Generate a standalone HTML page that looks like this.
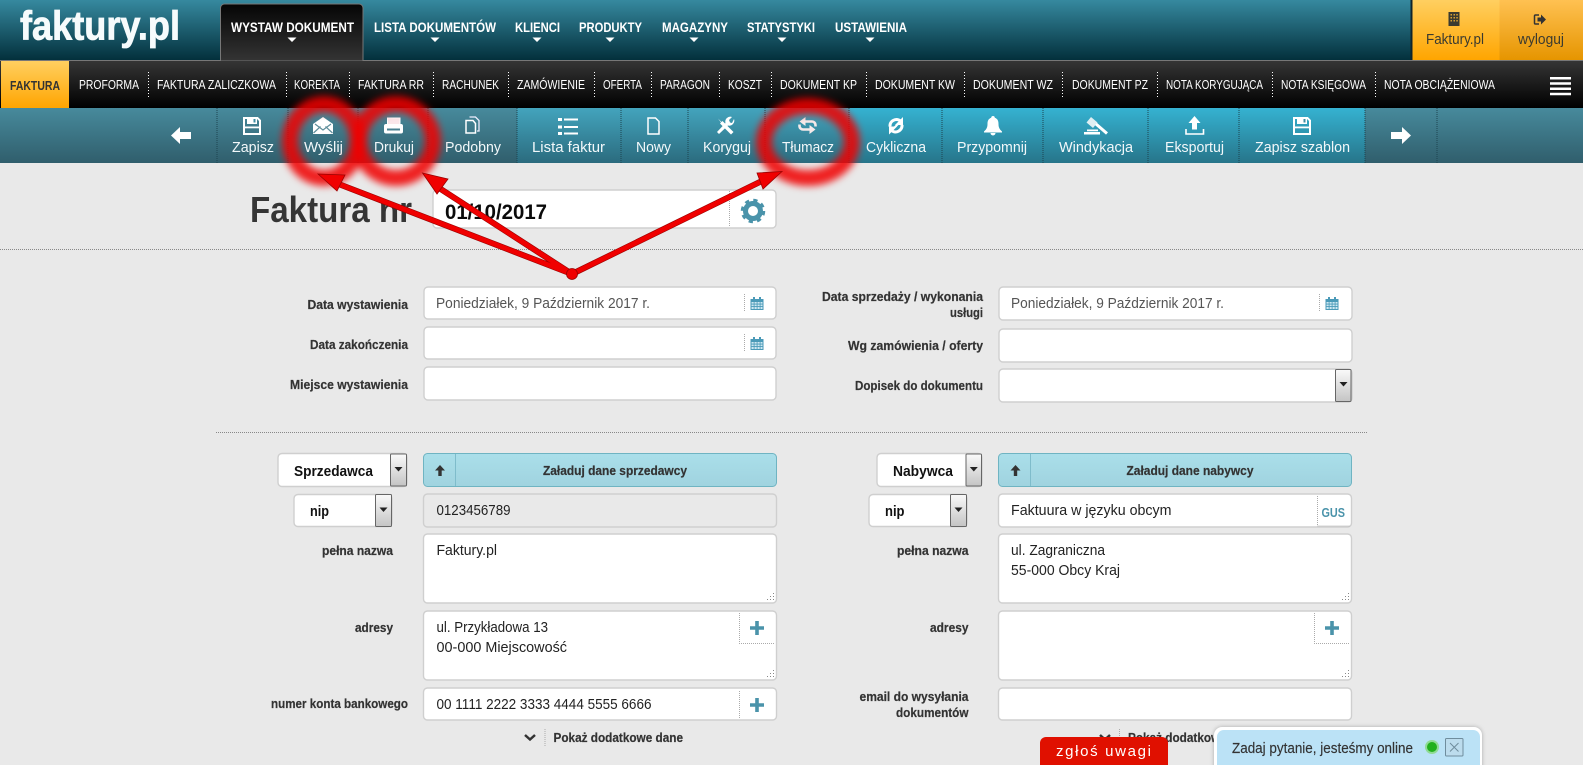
<!DOCTYPE html>
<html lang="pl"><head><meta charset="utf-8"><title>Faktury.pl</title>
<style>
html,body{margin:0;padding:0;width:1583px;height:765px;overflow:hidden;background:#e9e9e9}
svg{display:block;position:absolute;left:0;top:0}
text{font-family:"Liberation Sans",Arial,sans-serif}
.n{font-size:13.5px;font-weight:700;fill:#fff}
.s{font-size:12.5px;fill:#fff}
.t{font-size:15px;fill:#f2f8fa}
.l{font-size:12.5px;font-weight:700;fill:#333;stroke:#333;stroke-width:.2}
.v{font-size:14.5px;fill:#222}
.sel{font-size:15px;font-weight:700;fill:#111}
.inp{fill:#fff;stroke:#cfcfcf;stroke-width:1.4}
.sep{stroke:#fff;stroke-width:1;stroke-dasharray:1 2}
.td{stroke:#1d4450;stroke-width:1;stroke-dasharray:1 1}
.d{stroke:#aaa;stroke-width:1;stroke-dasharray:1 1;fill:none}
</style></head><body>
<svg width="1583" height="765" viewBox="0 0 1583 765" xmlns="http://www.w3.org/2000/svg">
<defs>
<linearGradient id="gh" x1="0" y1="0" x2="0" y2="1"><stop offset="0" stop-color="#36899f"/><stop offset="1" stop-color="#03303c"/></linearGradient>
<linearGradient id="gsub" x1="0" y1="0" x2="0" y2="1"><stop offset="0" stop-color="#353535"/><stop offset="1" stop-color="#000"/></linearGradient>
<linearGradient id="gact" x1="0" y1="0" x2="0" y2="1"><stop offset="0" stop-color="#050505"/><stop offset="1" stop-color="#343434"/></linearGradient>
<linearGradient id="go" x1="0" y1="0" x2="0" y2="1"><stop offset="0" stop-color="#ffcf60"/><stop offset="1" stop-color="#ffa500"/></linearGradient>
<linearGradient id="go2" x1="0" y1="0" x2="0" y2="1"><stop offset="0" stop-color="#ffc152"/><stop offset="1" stop-color="#e69500"/></linearGradient>
<linearGradient id="g1" x1="0" y1="0" x2="0" y2="1"><stop offset="0" stop-color="#478a9c"/><stop offset="1" stop-color="#305e6c"/></linearGradient>
<linearGradient id="g2" x1="0" y1="0" x2="0" y2="1"><stop offset="0" stop-color="#43a4bd"/><stop offset="1" stop-color="#2b6b7e"/></linearGradient>
<linearGradient id="g3" x1="0" y1="0" x2="0" y2="1"><stop offset="0" stop-color="#35b2d1"/><stop offset="1" stop-color="#27758a"/></linearGradient>
<linearGradient id="gb" x1="0" y1="0" x2="0" y2="1"><stop offset="0" stop-color="#aadfea"/><stop offset="1" stop-color="#a0d3df"/></linearGradient>
<linearGradient id="gs" x1="0" y1="0" x2="0" y2="1"><stop offset="0" stop-color="#fafafa"/><stop offset="1" stop-color="#c4c4c4"/></linearGradient>
<filter id="blur" x="-40%" y="-40%" width="180%" height="180%"><feGaussianBlur stdDeviation="3.800"/></filter>
<filter id="sh" x="-10%" y="-30%" width="120%" height="160%"><feGaussianBlur stdDeviation="2"/></filter>
<symbol id="cal" viewBox="0 0 13 13" overflow="visible"><path d="M0 2h13v11H0z" fill="#4a9ab8"/><path d="M1 5h2.200v1.600H1zM4 5h2.200v1.600H4zM7 5h2.200v1.600H7zM10 5h2v1.600h-2zM1 7.500h2.200v1.600H1zM4 7.500h2.200v1.600H4zM7 7.500h2.200v1.600H7zM10 7.500h2v1.600h-2zM1 10h2.200v2H1zM4 10h2.200v2H4zM7 10h2.200v2H7zM10 10h2v2h-2z" fill="#cfe8f2"/><path d="M2.500 0h2v3h-2zM8.500 0h2v3h-2z" fill="#4a9ab8"/></symbol>
<symbol id="floppy" viewBox="0 0 18 18" overflow="visible"><path d="M1 1h13.500L17 3.500V17H1z" fill="none" stroke="#fff" stroke-width="2"/><path d="M4 1h10v6H4z" fill="#fff"/><path d="M10.500 2h2v3.500h-2z" fill="#3f8ea3"/><path d="M1 9.500h16v1.800H1z" fill="#fff"/></symbol>
<symbol id="plus" viewBox="0 0 14 14" overflow="visible"><path d="M5.200 0h3.600v5.200H14v3.600H8.800V14H5.200V8.800H0V5.200h5.200z" fill="#4a93aa"/></symbol>
<symbol id="up" viewBox="0 0 10 11" overflow="visible"><path d="M5 0l5 5.500H6.700V11H3.300V5.500H0z" fill="#333"/></symbol>
<symbol id="grip" viewBox="0 0 9 8" overflow="visible"><path d="M7 0h1v1H7zM7 3h1v1H7zM4 3h1v1H4zM7 6h1v1H7zM4 6h1v1H4zM1 6h1v1H1z" fill="#888"/></symbol>
</defs>

<!-- header -->
<rect width="1583" height="60" fill="url(#gh)"/>
<text x="20" y="39.500" font-size="41" font-weight="700" fill="#f6fbfc" stroke="#f6fbfc" stroke-width=".8" textLength="160" lengthAdjust="spacingAndGlyphs">faktury.pl</text>
<rect x="0" y="60" width="1583" height="1" fill="#777"/>
<path d="M220.500 61V8a4 4 0 0 1 4-4H359a4 4 0 0 1 4 4V61z" fill="url(#gact)" stroke="#777"/>
<text class="n" x="231" y="32" textLength="123" lengthAdjust="spacingAndGlyphs">WYSTAW DOKUMENT</text>
<text class="n" x="374" y="32" textLength="122" lengthAdjust="spacingAndGlyphs">LISTA DOKUMENTÓW</text>
<text class="n" x="515" y="32" textLength="45" lengthAdjust="spacingAndGlyphs">KLIENCI</text>
<text class="n" x="579" y="32" textLength="63" lengthAdjust="spacingAndGlyphs">PRODUKTY</text>
<text class="n" x="662" y="32" textLength="66" lengthAdjust="spacingAndGlyphs">MAGAZYNY</text>
<text class="n" x="747" y="32" textLength="68" lengthAdjust="spacingAndGlyphs">STATYSTYKI</text>
<text class="n" x="835" y="32" textLength="72" lengthAdjust="spacingAndGlyphs">USTAWIENIA</text>
<path d="M287.500 37.500h9l-4.500 4.500zM430.500 37.500h9l-4.500 4.500zM532.500 37.500h9l-4.500 4.500zM605.500 37.500h9l-4.500 4.500zM689.500 37.500h9l-4.500 4.500zM777.500 37.500h9l-4.500 4.500zM865.500 37.500h9l-4.500 4.500z" fill="#fff"/>
<rect x="1410.500" y="0" width="2" height="60" fill="#10242b"/>
<rect x="1412.500" y="0" width="87" height="60" fill="url(#go)"/>
<rect x="1499.500" y="0" width="84" height="60" fill="url(#go2)"/>
<path d="M1448.500 12h11v14h-11z" fill="#3a3a30"/>
<path d="M1450.500 14h1.500v1.500h-1.500zM1453.500 14h1.500v1.500h-1.500zM1456.300 14h1.500v1.500h-1.500zM1450.500 17h1.500v1.500h-1.500zM1453.500 17h1.500v1.500h-1.500zM1456.300 17h1.500v1.500h-1.500zM1450.500 20h1.500v1.500h-1.500zM1453.500 20h1.500v1.500h-1.500zM1456.300 20h1.500v1.500h-1.500z" fill="#d9a030"/>
<path d="M1539 15h-3.500a1 1 0 0 0-1 1v7a1 1 0 0 0 1 1h3.500" fill="none" stroke="#333" stroke-width="1.500"/>
<path d="M1537.500 17.500h3.500V14.500l5 5-5 5v-3h-3.500z" fill="#333"/>
<text x="1426" y="44" font-size="15" fill="#3a3a30" textLength="58" lengthAdjust="spacingAndGlyphs">Faktury.pl</text>
<text x="1518" y="44" font-size="15" fill="#3a3a30" textLength="46" lengthAdjust="spacingAndGlyphs">wyloguj</text>

<!-- subnav -->
<rect x="0" y="61" width="1583" height="47" fill="url(#gsub)"/>
<rect x="1" y="61" width="68" height="47" fill="url(#go)"/>
<text x="10" y="90" font-size="13" font-weight="700" fill="#333" textLength="50" lengthAdjust="spacingAndGlyphs">FAKTURA</text>
<text class="s" x="79" y="89" textLength="60" lengthAdjust="spacingAndGlyphs">PROFORMA</text>
<text class="s" x="157" y="89" textLength="119" lengthAdjust="spacingAndGlyphs">FAKTURA ZALICZKOWA</text>
<text class="s" x="294" y="89" textLength="46" lengthAdjust="spacingAndGlyphs">KOREKTA</text>
<text class="s" x="358" y="89" textLength="66" lengthAdjust="spacingAndGlyphs">FAKTURA RR</text>
<text class="s" x="442" y="89" textLength="57" lengthAdjust="spacingAndGlyphs">RACHUNEK</text>
<text class="s" x="517" y="89" textLength="68" lengthAdjust="spacingAndGlyphs">ZAMÓWIENIE</text>
<text class="s" x="603" y="89" textLength="39" lengthAdjust="spacingAndGlyphs">OFERTA</text>
<text class="s" x="660" y="89" textLength="50" lengthAdjust="spacingAndGlyphs">PARAGON</text>
<text class="s" x="728" y="89" textLength="34" lengthAdjust="spacingAndGlyphs">KOSZT</text>
<text class="s" x="780" y="89" textLength="77" lengthAdjust="spacingAndGlyphs">DOKUMENT KP</text>
<text class="s" x="875" y="89" textLength="80" lengthAdjust="spacingAndGlyphs">DOKUMENT KW</text>
<text class="s" x="973" y="89" textLength="80" lengthAdjust="spacingAndGlyphs">DOKUMENT WZ</text>
<text class="s" x="1072" y="89" textLength="76" lengthAdjust="spacingAndGlyphs">DOKUMENT PZ</text>
<text class="s" x="1166" y="89" textLength="97" lengthAdjust="spacingAndGlyphs">NOTA KORYGUJĄCA</text>
<text class="s" x="1281" y="89" textLength="85" lengthAdjust="spacingAndGlyphs">NOTA KSIĘGOWA</text>
<text class="s" x="1384" y="89" textLength="111" lengthAdjust="spacingAndGlyphs">NOTA OBCIĄŻENIOWA</text>
<path class="sep" d="M148.500 72v25M286.500 72v25M349.500 72v25M433.500 72v25M508.500 72v25M594.500 72v25M651.500 72v25M719.500 72v25M771.500 72v25M866.500 72v25M964.500 72v25M1062.500 72v25M1157.500 72v25M1272.500 72v25M1375.500 72v25"/>
<path d="M1550 77h21v2.500h-21zM1550 82.300h21v2.500h-21zM1550 87.500h21v2.500h-21zM1550 92.700h21v2.500h-21z" fill="#fff"/>

<!-- toolbar -->
<rect x="0" y="108" width="517" height="55" fill="url(#g1)"/>
<rect x="517" y="108" width="332" height="55" fill="url(#g2)"/>
<rect x="849" y="108" width="516" height="55" fill="url(#g3)"/>
<rect x="1365" y="108" width="218" height="55" fill="url(#g1)"/>
<path class="td" d="M217 108v55M288 108v55M358 108v55M428 108v55M517 108v55M621 108v55M688 108v55M765 108v55M849 108v55M942 108v55M1043 108v55M1148 108v55M1239 108v55M1365 108v55M1437 108v55"/>
<path d="M171 135.500l9-8.500v5h11v7h-11v5z" fill="#fff"/>
<path d="M1411 135.500l-9-8.500v5h-11v7h11v5z" fill="#fff"/>
<use href="#floppy" x="243" y="117" width="18" height="18"/>
<path d="M313 124l10-7 10 7v10h-20z" fill="#fff"/><path d="M313.500 133l7-6.500M332.500 133l-7-6.500M315 124l8 6 8-6" fill="none" stroke="#5d8d9a" stroke-width="1.200"/>
<path d="M387.500 118h12.500v7h-12.500z" fill="#fbe7ea" stroke="#fff"/><rect x="384" y="124" width="19" height="9.500" rx="2" fill="#fff"/><rect x="387" y="128.500" width="13" height="2" fill="#4a8090"/>
<path d="M469.500 117h6l3.500 3.500V131h-2" fill="none" stroke="#eef" stroke-width="1.300"/><path d="M466 120.500h7l2.500 3V133H466z" fill="none" stroke="#fff" stroke-width="1.500"/>
<path d="M558 118h4v3h-4zM558 125.500h4v3h-4zM558 132h4v3h-4z" fill="#fff"/><path d="M564 118.500h14v2h-14zM564 126h14v2h-14zM564 132.500h14v2h-14z" fill="#fff"/>
<path d="M648 118h7.500l3.500 3.500V134h-11z" fill="none" stroke="#fff" stroke-width="1.500"/>
<path d="M718 118.500l3.500 3.500 1-1 11 11-2.500 2.500-11-11 1-1zM734 119a5 5 0 0 1-6 6.500l-9 8.500-2-2 8.500-9a5 5 0 0 1 6.500-6l-3 3 1 2.500 2 .5z" fill="#fff"/>
<path d="M804 121.500h8a3.500 3.500 0 0 1 3.500 3.500v1.500M811 129.500h-8a3.500 3.500 0 0 1-3.500-3.500v-1.500" fill="none" stroke="#f6eaea" stroke-width="2.600"/>
<path d="M805.500 117v9l-6-4.500zM809.500 125v9l6-4.500z" fill="#f6eaea"/>
<path d="M890 126.500a6.500 6.500 0 0 1 10.500-5.500M902 125a6.500 6.500 0 0 1-10.500 5.500" fill="none" stroke="#fff" stroke-width="3"/>
<path d="M903 117v8h-8zM889 134.500v-8h8z" fill="#fff"/>
<path d="M899.500 122.500l-7 7" stroke="#fff" stroke-width="2"/>
<path d="M993 116a1.800 1.800 0 0 1 1.800 1.800c2.700 1 3.700 3 3.700 6.200 0 4.500 2 6 3.500 7.500v1H984v-1c1.500-1.500 3.500-3 3.500-7.500 0-3.200 1-5.200 3.700-6.200A1.800 1.800 0 0 1 993 116zM990.500 133h5a2.500 2.500 0 0 1-5 0z" fill="#fff"/>
<path d="M1087 129.500h11v1.700h-11zM1084 132h16v2.500h-16z" fill="#fff"/>
<path d="M1091 117l6.500 5.500-4.500 5.500-6.500-5.500z" fill="#dfeef2"/>
<path d="M1096 124l11 9.500" stroke="#fff" stroke-width="3" fill="none"/>
<path d="M1194.500 116l6 7h-3.500v6.500h-5V123h-3.500z" fill="#fff"/><path d="M1186 129v5h17.500v-5" fill="none" stroke="#fff" stroke-width="1.600"/>
<use href="#floppy" x="1293" y="117" width="18" height="18"/>
<text class="t" x="232" y="152" textLength="42" lengthAdjust="spacingAndGlyphs">Zapisz</text>
<text class="t" x="304" y="152" textLength="39" lengthAdjust="spacingAndGlyphs">Wyślij</text>
<text class="t" x="374" y="152" textLength="40" lengthAdjust="spacingAndGlyphs">Drukuj</text>
<text class="t" x="445" y="152" textLength="56" lengthAdjust="spacingAndGlyphs">Podobny</text>
<text class="t" x="532" y="152" textLength="73" lengthAdjust="spacingAndGlyphs">Lista faktur</text>
<text class="t" x="636" y="152" textLength="35" lengthAdjust="spacingAndGlyphs">Nowy</text>
<text class="t" x="703" y="152" textLength="48" lengthAdjust="spacingAndGlyphs">Koryguj</text>
<text class="t" x="782" y="152" textLength="52" lengthAdjust="spacingAndGlyphs">Tłumacz</text>
<text class="t" x="866" y="152" textLength="60" lengthAdjust="spacingAndGlyphs">Cykliczna</text>
<text class="t" x="957" y="152" textLength="70" lengthAdjust="spacingAndGlyphs">Przypomnij</text>
<text class="t" x="1059" y="152" textLength="74" lengthAdjust="spacingAndGlyphs">Windykacja</text>
<text class="t" x="1165" y="152" textLength="59" lengthAdjust="spacingAndGlyphs">Eksportuj</text>
<text class="t" x="1255" y="152" textLength="95" lengthAdjust="spacingAndGlyphs">Zapisz szablon</text>

<!-- heading -->
<text x="250" y="222" font-size="36" font-weight="700" fill="#353535" textLength="162" lengthAdjust="spacingAndGlyphs">Faktura nr</text>
<rect class="inp" x="433" y="190" width="343" height="38" rx="4"/>
<text x="445" y="219" font-size="21" font-weight="700" fill="#0a0a0a" textLength="102" lengthAdjust="spacingAndGlyphs">01/10/2017</text>
<path class="d" d="M729.500 191v36"/>
<circle cx="753" cy="211" r="7.500" fill="none" stroke="#4a93aa" stroke-width="5"/>
<circle cx="753" cy="211" r="10.500" fill="none" stroke="#4a93aa" stroke-width="3.500" stroke-dasharray="4.120 4.120"/>
<path d="M0 249.500h1583" stroke="#888" stroke-dasharray="1 1"/>

<!-- top form left -->
<text class="l" x="307.500" y="309" textLength="100.500" lengthAdjust="spacingAndGlyphs">Data wystawienia</text>
<text class="l" x="310" y="349" textLength="98" lengthAdjust="spacingAndGlyphs">Data zakończenia</text>
<text class="l" x="290" y="389" textLength="118" lengthAdjust="spacingAndGlyphs">Miejsce wystawienia</text>
<rect class="inp" x="424" y="287" width="352" height="32" rx="4"/>
<rect class="inp" x="424" y="327" width="352" height="32" rx="4"/>
<rect class="inp" x="424" y="367" width="352" height="33" rx="4"/>
<text x="436" y="308" font-size="14.500" fill="#555" textLength="214" lengthAdjust="spacingAndGlyphs">Poniedziałek, 9 Październik 2017 r.</text>
<path class="d" d="M744.500 294v18M744.500 334v18" stroke="#888"/>
<use href="#cal" x="750.500" y="297" width="13" height="13"/>
<use href="#cal" x="750.500" y="337" width="13" height="13"/>

<!-- top form right -->
<text class="l" x="822" y="301" textLength="161" lengthAdjust="spacingAndGlyphs">Data sprzedaży / wykonania</text>
<text class="l" x="950" y="317" textLength="33" lengthAdjust="spacingAndGlyphs">usługi</text>
<text class="l" x="848" y="350" textLength="135" lengthAdjust="spacingAndGlyphs">Wg zamówienia / oferty</text>
<text class="l" x="855" y="390" textLength="128" lengthAdjust="spacingAndGlyphs">Dopisek do dokumentu</text>
<rect class="inp" x="999" y="287" width="353" height="33" rx="4"/>
<rect class="inp" x="999" y="329" width="353" height="33" rx="4"/>
<rect class="inp" x="999" y="369" width="353" height="33" rx="4"/>
<text x="1011" y="308" font-size="14.500" fill="#555" textLength="213" lengthAdjust="spacingAndGlyphs">Poniedziałek, 9 Październik 2017 r.</text>
<path class="d" d="M1319.500 294v18" stroke="#888"/>
<use href="#cal" x="1325.500" y="297" width="13" height="13"/>
<rect x="1335.500" y="369.500" width="15.500" height="32" rx="1" fill="url(#gs)" stroke="#666"/>
<path d="M1339.500 382h8l-4 4.500z" fill="#222"/>
<path d="M216 432.500h1151" stroke="#888" stroke-dasharray="1 1"/>

<!-- seller -->
<rect class="inp" x="278" y="453.500" width="129" height="33" rx="4"/>
<rect x="390.500" y="454" width="16" height="32" rx="1" fill="url(#gs)" stroke="#666"/>
<path d="M394.500 467h8l-4 4.500z" fill="#222"/>
<text class="sel" x="294" y="476" textLength="79" lengthAdjust="spacingAndGlyphs">Sprzedawca</text>
<rect x="423.500" y="453.500" width="353" height="33" rx="4" fill="url(#gb)" stroke="#6fb4c2"/>
<path d="M455.500 454v32" stroke="#7fbccb"/>
<use href="#up" x="435" y="465" width="10" height="11"/>
<text class="l" x="543" y="475" textLength="144" lengthAdjust="spacingAndGlyphs">Załaduj dane sprzedawcy</text>
<rect class="inp" x="294" y="494.500" width="98" height="32" rx="4"/>
<rect x="375.500" y="494.500" width="16" height="32" rx="1" fill="url(#gs)" stroke="#666"/>
<path d="M379.500 507.500h8l-4 4.500z" fill="#222"/>
<text class="sel" x="310" y="516" textLength="19" lengthAdjust="spacingAndGlyphs">nip</text>
<rect x="423.500" y="494" width="353" height="33" rx="4" fill="#e9e9e9" stroke="#cfcfcf" stroke-width="1.400"/>
<text class="v" x="436.500" y="515" textLength="74" lengthAdjust="spacingAndGlyphs">0123456789</text>
<text class="l" x="322" y="555" textLength="71" lengthAdjust="spacingAndGlyphs">pełna nazwa</text>
<rect class="inp" x="423.500" y="534" width="353" height="69" rx="4"/>
<text class="v" x="436.500" y="555" textLength="60.500" lengthAdjust="spacingAndGlyphs">Faktury.pl</text>
<use href="#grip" x="766" y="593" width="9" height="8"/>
<text class="l" x="355" y="632" textLength="38" lengthAdjust="spacingAndGlyphs">adresy</text>
<rect class="inp" x="423.500" y="611" width="353" height="69" rx="4"/>
<text class="v" x="436.500" y="632" textLength="111.500" lengthAdjust="spacingAndGlyphs">ul. Przykładowa 13</text>
<text class="v" x="436.500" y="652" textLength="130.500" lengthAdjust="spacingAndGlyphs">00-000 Miejscowość</text>
<path class="d" d="M739.500 613v30.500H775"/>
<use href="#plus" x="750" y="621" width="14" height="14"/>
<use href="#grip" x="766" y="670" width="9" height="8"/>
<text class="l" x="271" y="708" textLength="137" lengthAdjust="spacingAndGlyphs">numer konta bankowego</text>
<rect class="inp" x="423.500" y="688" width="353" height="32" rx="4"/>
<text class="v" x="436.500" y="709" textLength="215" lengthAdjust="spacingAndGlyphs">00 1111 2222 3333 4444 5555 6666</text>
<path class="d" d="M739.500 691v28"/>
<use href="#plus" x="750" y="698" width="14" height="14"/>
<path d="M525 735l5 4.500 5-4.500" fill="none" stroke="#333" stroke-width="2.500"/>
<path class="d" d="M545 729v17"/>
<text class="l" x="553.500" y="742" textLength="129.500" lengthAdjust="spacingAndGlyphs">Pokaż dodatkowe dane</text>

<!-- buyer -->
<rect class="inp" x="877" y="453.500" width="105" height="33" rx="4"/>
<rect x="966" y="454" width="15.500" height="32" rx="1" fill="url(#gs)" stroke="#666"/>
<path d="M969.800 467h8l-4 4.500z" fill="#222"/>
<text class="sel" x="893" y="476" textLength="60" lengthAdjust="spacingAndGlyphs">Nabywca</text>
<rect x="998.500" y="453.500" width="353" height="33" rx="4" fill="url(#gb)" stroke="#6fb4c2"/>
<path d="M1030.500 454v32" stroke="#7fbccb"/>
<use href="#up" x="1010.500" y="465" width="10" height="11"/>
<text class="l" x="1126.500" y="475" textLength="127" lengthAdjust="spacingAndGlyphs">Załaduj dane nabywcy</text>
<rect class="inp" x="869" y="494.500" width="98" height="32" rx="4"/>
<rect x="950.500" y="494.500" width="16" height="32" rx="1" fill="url(#gs)" stroke="#666"/>
<path d="M954.500 507.500h8l-4 4.500z" fill="#222"/>
<text class="sel" x="885" y="516" textLength="19.500" lengthAdjust="spacingAndGlyphs">nip</text>
<rect class="inp" x="998.500" y="494" width="353" height="33" rx="4"/>
<text class="v" x="1011" y="515" textLength="160.500" lengthAdjust="spacingAndGlyphs">Faktuura w języku obcym</text>
<path class="d" d="M1317.500 496v30H1350"/>
<text x="1321.500" y="517" font-size="12.500" font-weight="700" fill="#4a93aa" textLength="23.500" lengthAdjust="spacingAndGlyphs">GUS</text>
<text class="l" x="897" y="555" textLength="71.500" lengthAdjust="spacingAndGlyphs">pełna nazwa</text>
<rect class="inp" x="998.500" y="534" width="353" height="69" rx="4"/>
<text class="v" x="1011" y="555" textLength="94" lengthAdjust="spacingAndGlyphs">ul. Zagraniczna</text>
<text class="v" x="1011" y="575" textLength="109" lengthAdjust="spacingAndGlyphs">55-000 Obcy Kraj</text>
<use href="#grip" x="1341" y="593" width="9" height="8"/>
<text class="l" x="930" y="632" textLength="38.500" lengthAdjust="spacingAndGlyphs">adresy</text>
<rect class="inp" x="998.500" y="611" width="353" height="69" rx="4"/>
<path class="d" d="M1314.500 613v30.500H1350"/>
<use href="#plus" x="1325" y="621" width="14" height="14"/>
<use href="#grip" x="1341" y="670" width="9" height="8"/>
<text class="l" x="859.500" y="701" textLength="109" lengthAdjust="spacingAndGlyphs">email do wysyłania</text>
<text class="l" x="896" y="717" textLength="72.500" lengthAdjust="spacingAndGlyphs">dokumentów</text>
<rect class="inp" x="998.500" y="688" width="353" height="32" rx="4"/>
<path d="M1100 735l5 4.500 5-4.500" fill="none" stroke="#333" stroke-width="2.500"/>
<path class="d" d="M1119.500 729v17"/>
<text class="l" x="1128" y="742" textLength="129.500" lengthAdjust="spacingAndGlyphs">Pokaż dodatkowe dane</text>

<!-- red rings -->
<g filter="url(#blur)" fill="none" stroke="#f00000" stroke-opacity=".86" stroke-width="16">
<ellipse cx="324" cy="141" rx="34" ry="37"/>
<ellipse cx="396" cy="141" rx="37" ry="37"/>
<ellipse cx="808" cy="142" rx="44" ry="36"/>
</g>

<!-- red arrows -->
<g fill="none" stroke="#9a0000" stroke-width="6">
<path d="M336 183L572 274M436 186L572 274M768 178L572 274"/>
</g>
<g fill="none" stroke="#f00000" stroke-width="4.800">
<path d="M336 183L572 274M436 186L572 274M768 178L572 274"/>
</g>
<g stroke="#9a0000" stroke-width=".8" fill="#f00000">
<path d="M318 174L345 175L337 191z"/>
<path d="M422.500 173L448 179L437 194z"/>
<path d="M782 171.500L757 173L763 189z"/>
<circle cx="572" cy="274" r="5.500"/>
</g>

<!-- feedback tab -->
<path d="M1040 765V743a6 6 0 0 1 6-6h116a6 6 0 0 1 6 6v22z" fill="#e01000"/>
<text x="1056" y="756" font-size="15" fill="#fff" letter-spacing="2" textLength="97" lengthAdjust="spacing">zgłoś uwagi</text>

<!-- chat -->
<path d="M1214 770V735a8 8 0 0 1 8-8h252a8 8 0 0 1 8 8v35z" fill="#777" opacity=".55" filter="url(#sh)"/>
<path d="M1214 770V735a8 8 0 0 1 8-8h252a8 8 0 0 1 8 8v35z" fill="#fff"/>
<path d="M1217 770V737a7 7 0 0 1 7-7h249a7 7 0 0 1 7 7v33z" fill="#bbe2f6"/>
<text x="1232" y="753" font-size="14.500" fill="#333" stroke="#333" stroke-width=".15" textLength="181" lengthAdjust="spacingAndGlyphs">Zadaj pytanie, jesteśmy online</text>
<circle cx="1432" cy="747" r="7" fill="#90db95"/>
<circle cx="1432" cy="747" r="5" fill="#22b01e"/>
<rect x="1445.500" y="738.500" width="17.500" height="17.500" rx="1" fill="#bcdced" stroke="#6f8d9d"/>
<path d="M1450 743l8.500 8.500M1458.500 743l-8.500 8.500" stroke="#6f8d9d" fill="none"/>
</svg>
</body></html>
